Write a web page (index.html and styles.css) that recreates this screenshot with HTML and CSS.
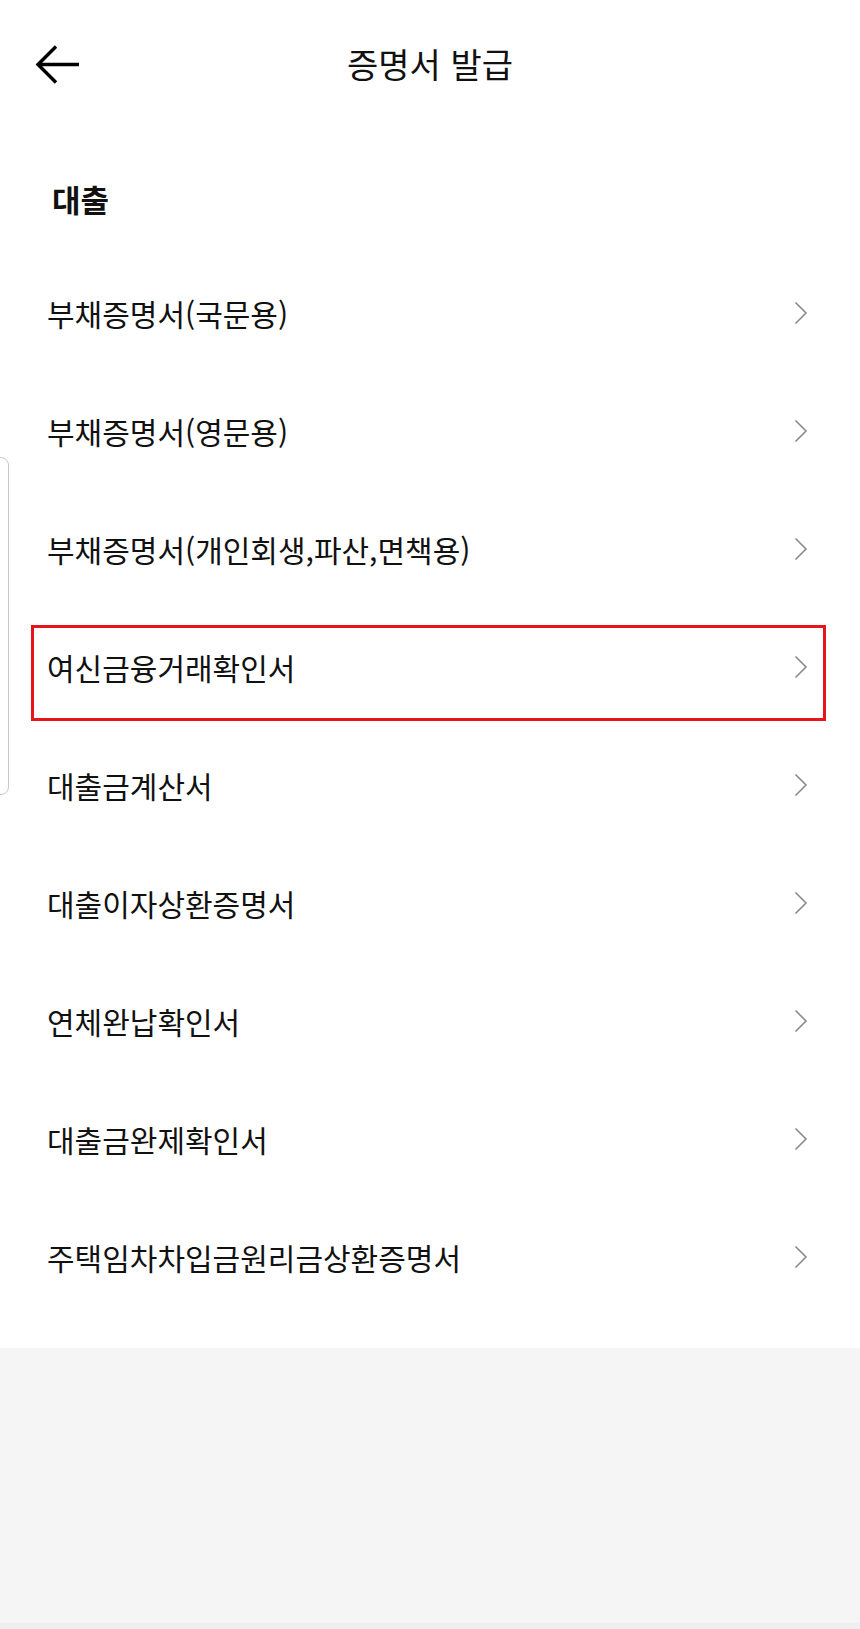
FILE: index.html
```html
<!DOCTYPE html>
<html lang="ko">
<head>
<meta charset="utf-8">
<title>증명서 발급</title>
<link rel="stylesheet" href="styles.css">
</head>
<body>
<div class="page">
  <div class="content">
    <header class="header">
      <button class="back" aria-label="뒤로">
        <svg width="46" height="40" viewBox="0 0 46 40"><path d="M3 19.5 H44 M21 1.5 L3 19.5 L21 37.5" fill="none" stroke="#000" stroke-width="3.4" stroke-linejoin="miter"/></svg>
      </button>
      <h1 class="title">증명서 발급</h1>
    </header>
    <h2 class="section">대출</h2>
    <ul class="list">
      <li class="row"><span>부채증명서(국문용)</span><svg class="chev" width="14" height="24" viewBox="0 0 14 24"><path d="M1.5 1.5 L12 12 L1.5 22.5" fill="none" stroke="#8a8a8a" stroke-width="1.6"/></svg></li>
      <li class="row"><span>부채증명서(영문용)</span><svg class="chev" width="14" height="24" viewBox="0 0 14 24"><path d="M1.5 1.5 L12 12 L1.5 22.5" fill="none" stroke="#8a8a8a" stroke-width="1.6"/></svg></li>
      <li class="row"><span>부채증명서(개인회생,파산,면책용)</span><svg class="chev" width="14" height="24" viewBox="0 0 14 24"><path d="M1.5 1.5 L12 12 L1.5 22.5" fill="none" stroke="#8a8a8a" stroke-width="1.6"/></svg></li>
      <li class="row highlighted"><span>여신금융거래확인서</span><svg class="chev" width="14" height="24" viewBox="0 0 14 24"><path d="M1.5 1.5 L12 12 L1.5 22.5" fill="none" stroke="#8a8a8a" stroke-width="1.6"/></svg></li>
      <li class="row"><span>대출금계산서</span><svg class="chev" width="14" height="24" viewBox="0 0 14 24"><path d="M1.5 1.5 L12 12 L1.5 22.5" fill="none" stroke="#8a8a8a" stroke-width="1.6"/></svg></li>
      <li class="row"><span>대출이자상환증명서</span><svg class="chev" width="14" height="24" viewBox="0 0 14 24"><path d="M1.5 1.5 L12 12 L1.5 22.5" fill="none" stroke="#8a8a8a" stroke-width="1.6"/></svg></li>
      <li class="row"><span>연체완납확인서</span><svg class="chev" width="14" height="24" viewBox="0 0 14 24"><path d="M1.5 1.5 L12 12 L1.5 22.5" fill="none" stroke="#8a8a8a" stroke-width="1.6"/></svg></li>
      <li class="row"><span>대출금완제확인서</span><svg class="chev" width="14" height="24" viewBox="0 0 14 24"><path d="M1.5 1.5 L12 12 L1.5 22.5" fill="none" stroke="#8a8a8a" stroke-width="1.6"/></svg></li>
      <li class="row"><span>주택임차차입금원리금상환증명서</span><svg class="chev" width="14" height="24" viewBox="0 0 14 24"><path d="M1.5 1.5 L12 12 L1.5 22.5" fill="none" stroke="#8a8a8a" stroke-width="1.6"/></svg></li>
    </ul>
  </div>
  <div class="footer-bar"></div>
  <div class="edge-handle"></div>
</div>
</body>
</html>
```
FILE: styles.css
```css
* { box-sizing: border-box; }
html, body { margin: 0; padding: 0; }
body {
  font-family: "Noto Sans CJK KR", "Noto Sans", sans-serif;
  color: #111;
  background: #f5f5f5;
}
.page {
  position: relative;
  width: 860px;
  height: 1629px;
  display: flex;
  flex-direction: column;
  background: #f5f5f5;
}
.content {
  background: #fff;
  height: 1348px;
}
.header {
  position: relative;
  height: 128px;
  display: flex;
  align-items: center;
  justify-content: center;
}
.back {
  position: absolute;
  left: 35px;
  top: 45px;
  width: 46px;
  height: 40px;
  padding: 0;
  border: 0;
  background: none;
  display: flex;
}
.title {
  margin: 0;
  font-size: 34px;
  font-weight: 400;
  line-height: 1;
  color: #111;
}
.section {
  margin: 0;
  padding-left: 52px;
  padding-top: 14px;
  height: 126px;
  display: flex;
  align-items: center;
  font-size: 31px;
  font-weight: 700;
  line-height: 1;
  color: #111;
}
.list {
  list-style: none;
  margin: 0;
  padding: 0;
}
.row {
  position: relative;
  height: 118px;
  display: flex;
  align-items: center;
  justify-content: space-between;
  padding: 0 52px 0 47px;
  font-size: 30px;
  line-height: 1;
  color: #111;
}
.chev { display: block; }
.highlighted::after {
  content: "";
  position: absolute;
  left: 31px;
  right: 34px;
  top: 17px;
  bottom: 5px;
  border: 3px solid #e8141b;
}
.footer-bar {
  margin-top: auto;
  height: 8px;
  background: #efefef;
  border-top: 1px solid #f8f8f8;
}
.edge-handle {
  position: absolute;
  left: -12px;
  top: 457px;
  width: 21px;
  height: 338px;
  border: 1px solid #c8c8c8;
  border-radius: 8px;
}
```
